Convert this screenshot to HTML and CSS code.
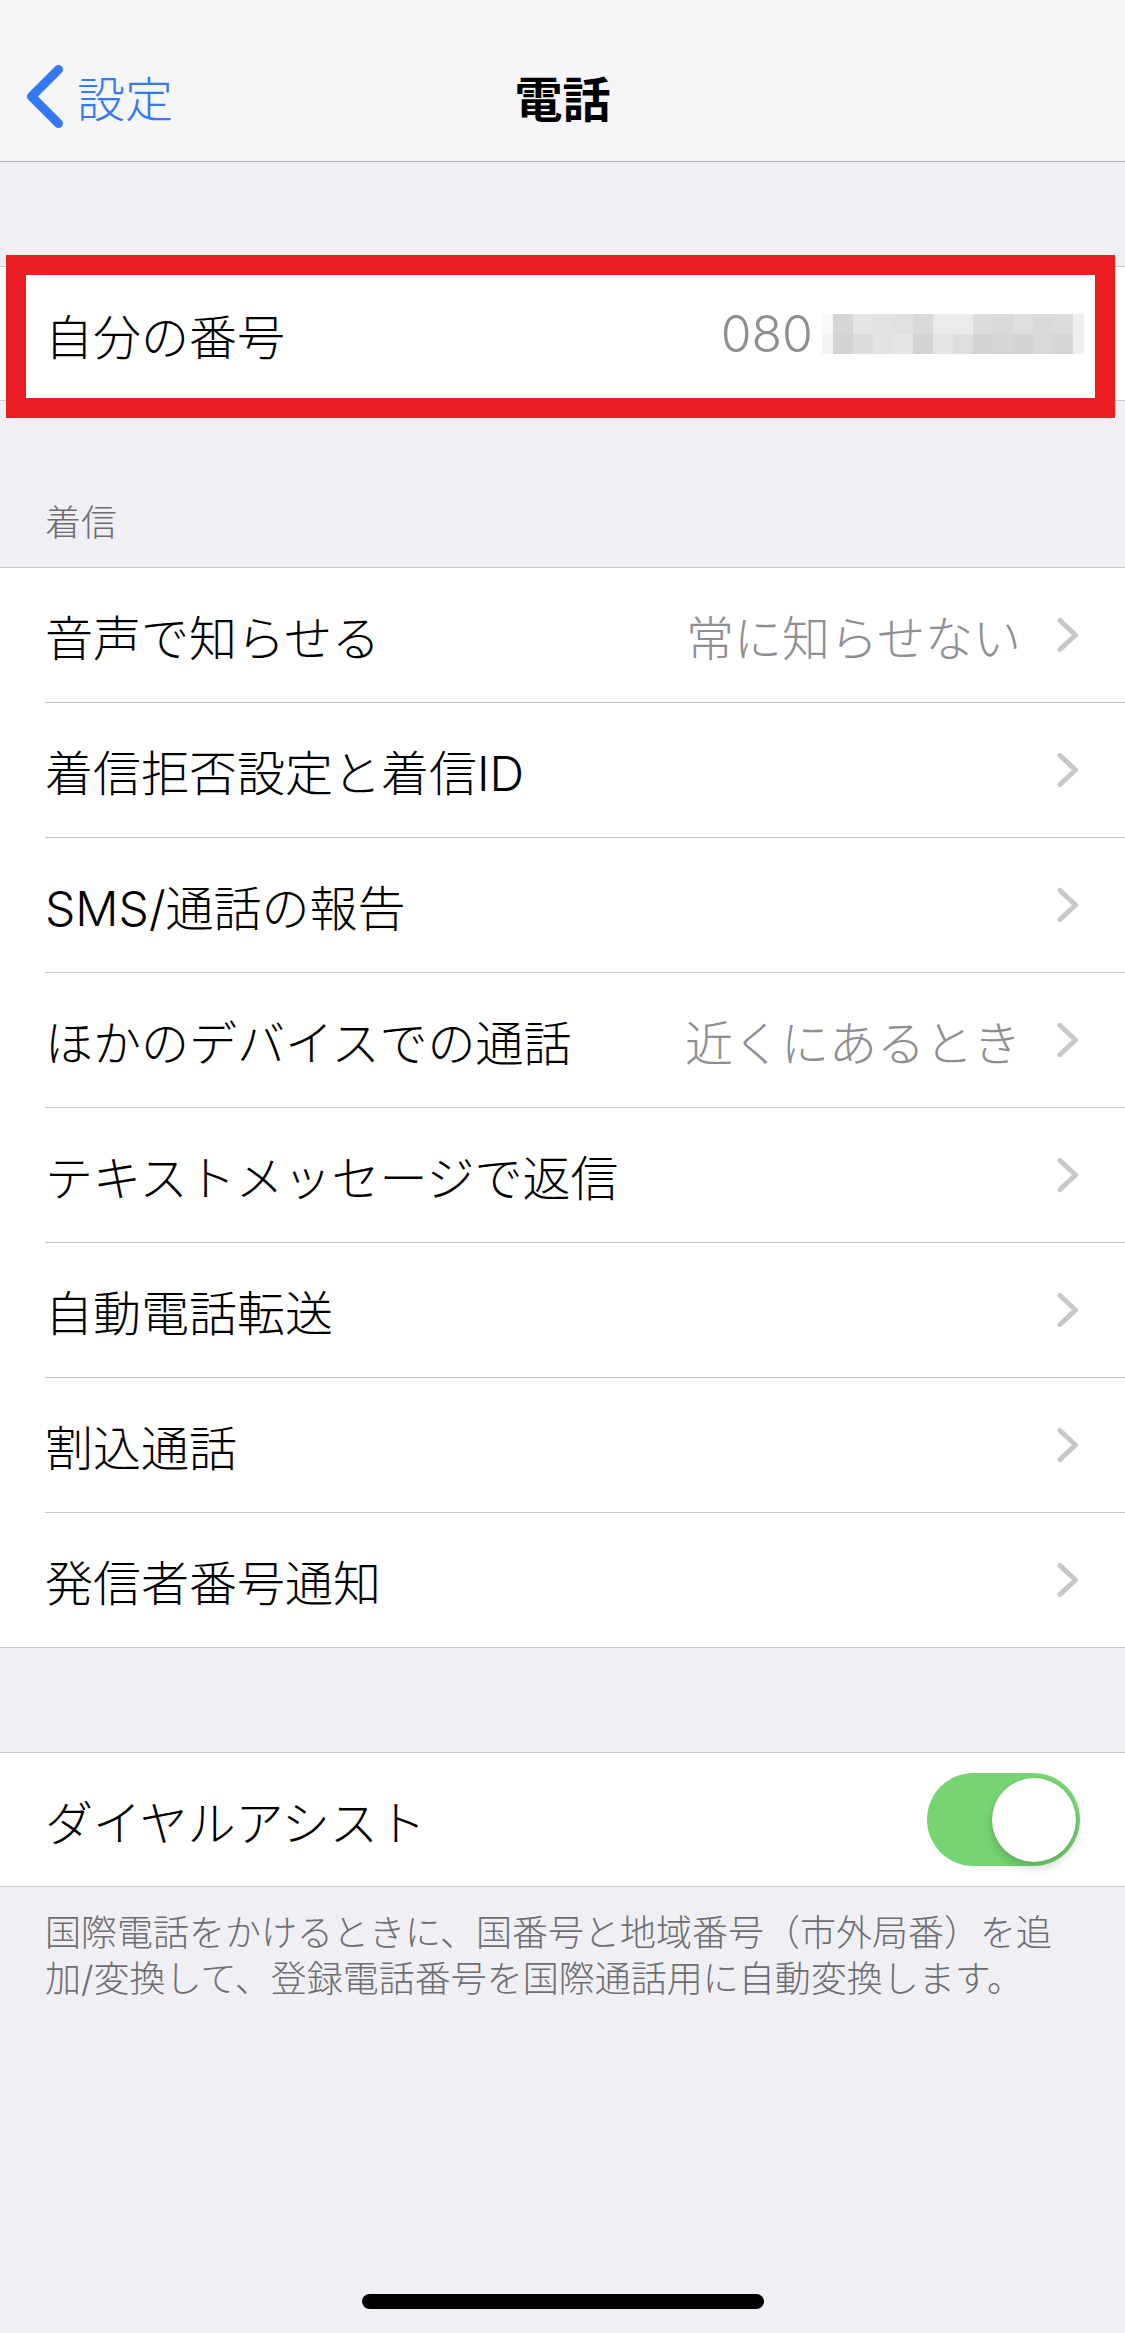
FILE: index.html
```html
<!DOCTYPE html>
<html lang="ja">
<head>
    <meta charset="UTF-8">
    <meta name="viewport" content="width=device-width, initial-scale=1.0">
    <title>電話</title>
    <link rel="stylesheet" href="styles.css">
</head>
<body>
    <div class="nav">
        <div class="back">
            <svg class="back-icon" width="36" height="63" viewBox="0 0 36 63">
                <polyline points="31.5,4.5 4.5,31.5 31.5,58.5" fill="none" stroke="#3478f6" stroke-width="9" stroke-linecap="round" stroke-linejoin="round"/>
            </svg>
            <span>設定</span>
        </div>
        <div class="title">電話</div>
        <div></div>
    </div>

    <div class="group group-mine">
        <div class="cell">
            <span class="label">自分の番号</span>
            <span class="number">
                <span class="value">080</span>
                <span class="mosaic">
                    <i style="background:#f9f9f9"></i><i style="background:#d6d6d6"></i><i style="background:#e6e6e6"></i><i style="background:#e2e2e2"></i><i style="background:#e0e0e0"></i><i style="background:#dadada"></i><i style="background:#ebebeb"></i><i style="background:#ebebeb"></i><i style="background:#dcdcdc"></i><i style="background:#d9d9d9"></i><i style="background:#dfdfdf"></i><i style="background:#dadada"></i><i style="background:#dcdcdc"></i><i style="background:#efefef"></i>
                    <i style="background:#f4f4f4"></i><i style="background:#d3d3d3"></i><i style="background:#dcdcdc"></i><i style="background:#e3e3e3"></i><i style="background:#e5e5e5"></i><i style="background:#d2d2d2"></i><i style="background:#e5e5e5"></i><i style="background:#dedede"></i><i style="background:#d2d2d2"></i><i style="background:#d6d6d6"></i><i style="background:#d3d3d3"></i><i style="background:#d9d9d9"></i><i style="background:#d6d6d6"></i><i style="background:#efefef"></i>
                </span>
            </span>
        </div>
        <div class="highlight"></div>
    </div>

    <div class="section-header">着信</div>
    <div class="group">
        <div class="row">
            <span class="label">音声で知らせる</span>
            <span class="value">常に知らせない</span>
            <svg class="chevron" width="24" height="36" viewBox="0 0 24 36"><polyline points="4,3.5 19.5,18 4,32.5" fill="none" stroke="#c7c7cc" stroke-width="5" stroke-linecap="round" stroke-linejoin="round"/></svg>
        </div>
        <div class="row">
            <span class="label">着信拒否設定と着信ID</span>
            <svg class="chevron" width="24" height="36" viewBox="0 0 24 36"><polyline points="4,3.5 19.5,18 4,32.5" fill="none" stroke="#c7c7cc" stroke-width="5" stroke-linecap="round" stroke-linejoin="round"/></svg>
        </div>
        <div class="row">
            <span class="label">SMS/通話の報告</span>
            <svg class="chevron" width="24" height="36" viewBox="0 0 24 36"><polyline points="4,3.5 19.5,18 4,32.5" fill="none" stroke="#c7c7cc" stroke-width="5" stroke-linecap="round" stroke-linejoin="round"/></svg>
        </div>
        <div class="row">
            <span class="label">ほかのデバイスでの通話</span>
            <span class="value">近くにあるとき</span>
            <svg class="chevron" width="24" height="36" viewBox="0 0 24 36"><polyline points="4,3.5 19.5,18 4,32.5" fill="none" stroke="#c7c7cc" stroke-width="5" stroke-linecap="round" stroke-linejoin="round"/></svg>
        </div>
        <div class="row">
            <span class="label">テキストメッセージで返信</span>
            <svg class="chevron" width="24" height="36" viewBox="0 0 24 36"><polyline points="4,3.5 19.5,18 4,32.5" fill="none" stroke="#c7c7cc" stroke-width="5" stroke-linecap="round" stroke-linejoin="round"/></svg>
        </div>
        <div class="row">
            <span class="label">自動電話転送</span>
            <svg class="chevron" width="24" height="36" viewBox="0 0 24 36"><polyline points="4,3.5 19.5,18 4,32.5" fill="none" stroke="#c7c7cc" stroke-width="5" stroke-linecap="round" stroke-linejoin="round"/></svg>
        </div>
        <div class="row">
            <span class="label">割込通話</span>
            <svg class="chevron" width="24" height="36" viewBox="0 0 24 36"><polyline points="4,3.5 19.5,18 4,32.5" fill="none" stroke="#c7c7cc" stroke-width="5" stroke-linecap="round" stroke-linejoin="round"/></svg>
        </div>
        <div class="row">
            <span class="label">発信者番号通知</span>
            <svg class="chevron" width="24" height="36" viewBox="0 0 24 36"><polyline points="4,3.5 19.5,18 4,32.5" fill="none" stroke="#c7c7cc" stroke-width="5" stroke-linecap="round" stroke-linejoin="round"/></svg>
        </div>
    </div>

    <div class="group group-assist">
        <div class="cell">
            <span class="label">ダイヤルアシスト</span>
            <span class="switch"><span class="knob"></span></span>
        </div>
    </div>
    <p class="footer">国際電話をかけるときに、国番号と地域番号（市外局番）を追加/変換して、登録電話番号を国際通話用に自動変換します。</p>

    <div class="home-indicator"></div>
</body>
</html>
```

FILE: styles.css
```css
body {
    margin: 0;
    min-height: 2333px;
    position: relative;
    background: #efeff4;
    font-family: Inter, "Noto Sans CJK JP", sans-serif;
    font-weight: 300;
    color: #000;
}
.nav {
    box-sizing: border-box;
    height: 162px;
    padding: 31px 27px 0;
    display: grid;
    grid-template-columns: 1fr auto 1fr;
    align-items: center;
    background: #f6f6f8;
    border-bottom: 1px solid #b2b2b5;
}
.back {
    display: flex;
    align-items: center;
    gap: 14px;
    color: #3478f6;
    font-size: 48px;
}
.back-icon {
    display: block;
}
.title {
    font-size: 48px;
    font-weight: bold;
}
.group {
    background: #fff;
    border-top: 1px solid #c8c7cc;
    border-bottom: 1px solid #c8c7cc;
}
.group-mine {
    position: relative;
    margin-top: 104px;
}
.group-assist {
    margin-top: 104px;
}
.cell {
    height: 133px;
    display: flex;
    align-items: center;
    justify-content: space-between;
    padding: 0 45px;
    font-size: 48px;
}
.number {
    display: flex;
    align-items: center;
    margin-right: -4px;
}
.number .value {
    font-size: 50px;
    margin-right: 9px;
    color: #8e8e93;
}
.mosaic {
    display: grid;
    grid-template-columns: 11px repeat(12, 20px) 11px;
    grid-template-rows: 20px 20px;
}
.mosaic i {
    display: block;
}
.highlight {
    position: absolute;
    top: -12px;
    bottom: -18px;
    left: 6px;
    right: 10px;
    border: 20px solid #ec1c24;
}
.section-header {
    padding: 100px 45px 22px;
    font-size: 36px;
    line-height: 44px;
    color: #6d6d72;
}
.row {
    height: 134px;
    margin-left: 45px;
    padding-right: 45px;
    display: flex;
    align-items: center;
    font-size: 48px;
    border-bottom: 1px solid #c8c7cc;
}
.row:last-child {
    border-bottom: none;
}
.label {
    flex: 1;
}
.row .value {
    color: #8e8e93;
    margin-right: 35px;
}
.chevron {
    display: block;
}
.switch {
    position: relative;
    width: 153px;
    height: 93px;
    border-radius: 47px;
    background: #76d572;
}
.knob {
    position: absolute;
    top: 4.5px;
    right: 4.5px;
    width: 84px;
    height: 84px;
    border-radius: 50%;
    background: #fff;
    box-shadow: 0 6px 10px rgba(0, 0, 0, 0.18), 0 0 2px rgba(0, 0, 0, 0.12);
}
.footer {
    margin: 0;
    padding: 23px 60px 0 45px;
    font-size: 36px;
    line-height: 46px;
    color: #6d6d72;
}
.home-indicator {
    position: absolute;
    left: 362px;
    bottom: 24px;
    width: 402px;
    height: 15px;
    border-radius: 8px;
    background: #000;
}
```
